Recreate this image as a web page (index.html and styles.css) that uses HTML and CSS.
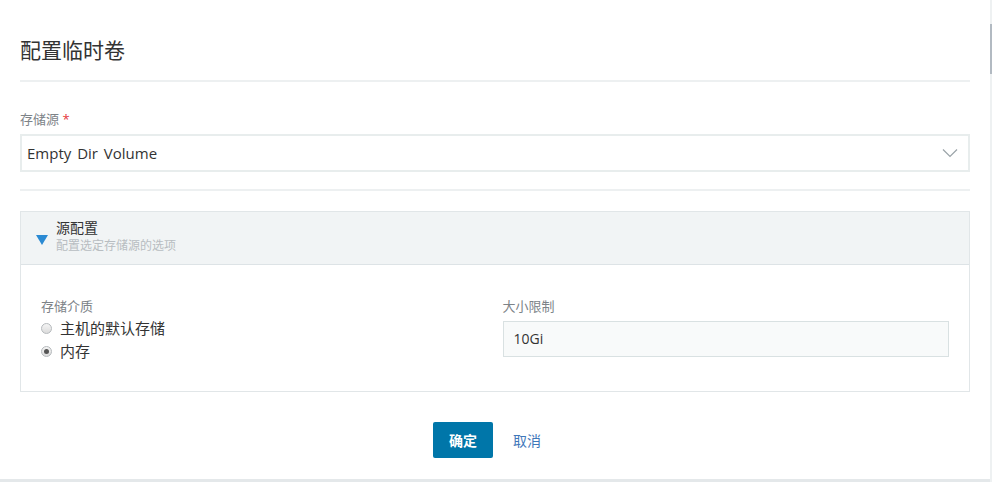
FILE: index.html
```html
<!DOCTYPE html>
<html lang="zh">
<head>
    <meta charset="UTF-8">
    <title>配置临时卷</title>
    <link rel="stylesheet" href="styles.css">
</head>
<body>

<div class="page">
    <section class="panel">
        <h2 class="panel-title">配置临时卷</h2>

        <div class="field">
            <label class="field-label">存储源 <span class="required">*</span></label>
            <div class="select-box">
                <span>Empty Dir Volume</span>
                <svg class="chevron" width="16" height="10" viewBox="0 0 16 10">
                    <path d="M1 1.5 L8 8.5 L15 1.5" fill="none" stroke="#9aa3a8" stroke-width="1.2"/>
                </svg>
            </div>
        </div>

        <div class="accordion">
            <div class="accordion-head">
                <svg class="caret" width="12" height="10" viewBox="0 0 12 10">
                    <path d="M0 0 H12 L6 10 Z" fill="#2b8ad3"/>
                </svg>
                <div>
                    <div class="accordion-title">源配置</div>
                    <div class="accordion-sub">配置选定存储源的选项</div>
                </div>
            </div>
            <div class="accordion-body">
                <div class="col">
                    <div class="sub-label">存储介质</div>
                    <label class="radio"><span class="dot"></span>主机的默认存储</label>
                    <label class="radio"><span class="dot checked"></span>内存</label>
                </div>
                <div class="col">
                    <div class="sub-label">大小限制</div>
                    <div class="text-input">10Gi</div>
                </div>
            </div>
        </div>

        <div class="actions">
            <button class="btn btn-primary">确定</button>
            <button class="btn btn-link">取消</button>
        </div>
    </section>
    <div class="scrollbar"><div class="thumb"></div></div>
</div>

</body>
</html>
```

FILE: styles.css
```css
html, body {
    margin: 0;
    padding: 0;
}

body {
    background: #e4e8ea;
    font-family: "Open Sans", "Noto Sans CJK SC", sans-serif;
    color: #333;
    width: 992px;
    height: 482px;
    overflow: hidden;
}

.page {
    display: flex;
    height: 479px;
}

.panel {
    background: #fff;
    width: 950px;
    height: 479px;
    padding: 0 20px;
    flex: none;
}

.scrollbar {
    width: 2px;
    background: #eef1f2;
    height: 482px;
}

.thumb {
    margin-top: 24px;
    height: 50px;
    background: #b2bac2;
}

.panel-title {
    margin: 0;
    padding-top: 35px;
    height: 45px;
    font-size: 21px;
    font-weight: normal;
    line-height: 30px;
    color: #333;
    border-bottom: 2px solid #edf0f1;
}

.field {
    padding-top: 28px;
    padding-bottom: 17px;
    border-bottom: 2px solid #edf0f1;
}

.field-label {
    display: block;
    font-size: 13px;
    line-height: 18px;
    color: #7d8388;
    margin-bottom: 6px;
}

.required {
    color: #e5353a;
}

.select-box {
    display: flex;
    align-items: center;
    justify-content: space-between;
    height: 34px;
    border: 2px solid #e8eded;
    padding: 0 10px 0 5px;
    font-size: 15px;
    word-spacing: 2px;
    color: #333;
}

.accordion {
    margin-top: 20px;
    border: 1px solid #e1e6e8;
}

.accordion-head {
    display: flex;
    align-items: center;
    height: 52px;
    background: #f1f4f5;
    border-bottom: 1px solid #dde3e6;
    padding-left: 15px;
}

.caret {
    margin-right: 8px;
    margin-top: 4px;
}

.accordion-title {
    font-size: 14px;
    line-height: 18px;
    color: #333;
    margin-top: -4px;
}

.accordion-sub {
    font-size: 12px;
    line-height: 16px;
    color: #b8bdc1;
    margin-top: 1px;
}

.accordion-body {
    display: grid;
    grid-template-columns: 1fr 1fr;
    column-gap: 15px;
    padding: 32px 20px 24px;
    height: 70px;
}

.sub-label {
    font-size: 13px;
    line-height: 18px;
    color: #7d8388;
    margin-bottom: 7px;
}

.radio {
    display: flex;
    align-items: center;
    font-size: 15px;
    line-height: 23px;
    color: #333;
    margin-top: -5px;
}

.radio + .radio {
    margin-top: 0;
}

.dot {
    width: 9px;
    height: 9px;
    border-radius: 50%;
    border: 1px solid #b5b9bc;
    background: linear-gradient(#f4f4f4, #dcdcdc);
    margin-right: 8px;
    position: relative;
}

.dot.checked::after {
    content: "";
    position: absolute;
    left: 2px;
    top: 2px;
    width: 5px;
    height: 5px;
    border-radius: 50%;
    background: #555;
}

.text-input {
    height: 34px;
    line-height: 34px;
    border: 1px solid #d9e1e2;
    background: #f8fafa;
    padding: 0 10px;
    font-size: 14px;
    color: #333;
    margin-top: -1px;
}

.actions {
    display: flex;
    justify-content: center;
    gap: 4px;
    margin-top: 30px;
}

.btn {
    height: 36px;
    padding: 0 16px;
    border: 0;
    border-radius: 2px;
    font-family: "Open Sans", "Noto Sans CJK SC", sans-serif;
    font-size: 14px;
    cursor: pointer;
}

.btn-primary {
    background: #0076a9;
    color: #fff;
    font-weight: bold;
}

.btn-link {
    background: transparent;
    color: #3f78ba;
}
```
